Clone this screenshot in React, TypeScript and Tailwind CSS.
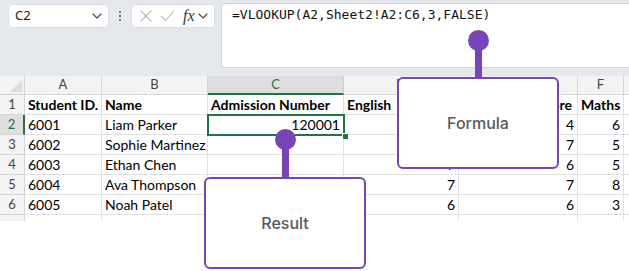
import React from "react";

const cols = [
  { key: "A", w: 77, label: "A" },
  { key: "B", w: 106, label: "B" },
  { key: "C", w: 136, label: "C" },
  { key: "D", w: 115, label: "D" },
  { key: "E", w: 119, label: "E" },
  { key: "F", w: 46, label: "F" },
  { key: "G", w: 40, label: "" },
];

type Row = { n: number; cells: (string | number)[]; bold?: boolean };

const rows: Row[] = [
  { n: 1, cells: ["Student ID.", "Name", "Admission Number", "English", "Science Score", "Maths", ""], bold: true },
  { n: 2, cells: ["6001", "Liam Parker", 120001, "", 4, 6, ""] },
  { n: 3, cells: ["6002", "Sophie Martinez", "", "", 7, 5, ""] },
  { n: 4, cells: ["6003", "Ethan Chen", "", 7, 6, 5, ""] },
  { n: 5, cells: ["6004", "Ava Thompson", "", 7, 7, 8, ""] },
  { n: 6, cells: ["6005", "Noah Patel", "", 6, 6, 3, ""] },
];

function Chevron({ className }: { className?: string }) {
  return (
    <svg className={className} width="10" height="6" viewBox="0 0 10 6" fill="none">
      <path d="M1 1l4 4 4-4" stroke="#444" strokeWidth="1.1" strokeLinecap="round" strokeLinejoin="round" />
    </svg>
  );
}

export default function App() {
  return (
    <div className="relative w-[629px] h-[271px] overflow-hidden bg-white" style={{ fontFamily: "Lato, 'Liberation Sans', sans-serif" }}>
      {/* top bar */}
      <div className="h-[76px] bg-[#e4e7eb] flex items-start">
        <div className="shrink-0 ml-[8px] mt-[4px] w-[101px] h-[24px] bg-white rounded-[4px] border border-[#dcdfe3] flex items-center justify-between pl-[6px] pr-[6px]">
          <span className="text-[13px] text-[#222]" style={{ fontFamily: "'Noto Sans', sans-serif" }}>C2</span>
          <Chevron />
        </div>
        <div className="shrink-0 w-[22px] h-[32px] flex flex-col items-center justify-center gap-[2px]">
          <span className="w-[2px] h-[2px] bg-[#555] rounded-full" />
          <span className="w-[2px] h-[2px] bg-[#555] rounded-full" />
          <span className="w-[2px] h-[2px] bg-[#555] rounded-full" />
        </div>
        <div className="shrink-0 mt-[4px] w-[84px] h-[24px] bg-white rounded-[4px] border border-[#dcdfe3] flex items-center pl-[7px] pr-[3px]">
          <svg width="14" height="14" viewBox="0 0 14 14" fill="none">
            <path d="M2 2l10 10M12 2L2 12" stroke="#b8b8b8" strokeWidth="1.1" strokeLinecap="round" />
          </svg>
          <svg className="ml-[7px]" width="15" height="14" viewBox="0 0 15 14" fill="none">
            <path d="M1.5 7.5l4 4 8-9" stroke="#b8b8b8" strokeWidth="1.1" strokeLinecap="round" strokeLinejoin="round" />
          </svg>
          <span className="ml-[8px] text-[16px] italic text-[#333] leading-none" style={{ fontFamily: "'Liberation Serif', serif" }}>fx</span>
          <Chevron className="ml-[3px]" />
        </div>
        <div
          className="ml-[6px] mt-[3px] flex-1 h-[65px] bg-white rounded-l-[4px] border border-[#d2d5d9] border-r-0 pl-[10px] pt-[3px] text-[13px] leading-[16px] text-[#111]"
          style={{ fontFamily: "'DejaVu Sans Mono', monospace" }}
        >
          =VLOOKUP(A2,Sheet2!A2:C6,3,FALSE)
        </div>
      </div>

      {/* grid */}
      <div className="flex flex-col">
        {/* column header */}
        <div className="flex h-[19px]">
          <div className="w-[25px] shrink-0 h-full bg-[#f3f3f3] border-r border-b border-[#d5d5d5] relative">
            <svg className="absolute right-[2px] bottom-[2px]" width="12" height="12" viewBox="0 0 12 12">
              <path d="M12 0L12 12L0 12Z" fill="#dcdcdc" />
            </svg>
          </div>
          {cols.map((c) => (
            <div
              key={c.key}
              className={
                c.key === "C"
                  ? "h-full bg-[#dedede] border-r border-[#d0d0d0] border-b-2 border-b-[#217346] flex items-center justify-center text-[13px] text-[#217346]"
                  : "h-full bg-[#f3f3f3] border-r border-b border-[#d5d5d5] flex items-center justify-center text-[13px] text-[#444]"
              }
              style={{ width: c.w, flexShrink: 0 }}
            >
              {c.label}
            </div>
          ))}
        </div>
        {rows.map((r) => (
          <div key={r.n} className="flex h-[20px]">
            <div
              className={
                r.n === 2
                  ? "w-[25px] shrink-0 h-full bg-[#dedede] border-r-2 border-r-[#217346] border-b border-[#d5d5d5] flex items-center justify-center text-[13px] text-[#217346]"
                  : "w-[25px] shrink-0 h-full bg-[#f3f3f3] border-r border-b border-[#d5d5d5] flex items-center justify-center text-[13px] text-[#444]"
              }
            >
              {r.n}
            </div>
            {cols.map((c, i) => {
              const v = r.cells[i];
              const isNum = typeof v === "number";
              const rightHead = r.bold && c.key === "E";
              return (
                <div
                  key={c.key}
                  className={
                    "h-full border-r border-b border-[#e1e1e1] flex items-center text-[14px] text-black whitespace-nowrap overflow-hidden " +
                    (isNum ? "justify-end pl-[3px] pr-[3px] " : rightHead ? "justify-end pr-[5px] " : "justify-start pl-[3px] pr-[3px] ") +
                    (r.bold ? "font-bold" : "")
                  }
                  style={{ width: c.w, flexShrink: 0 }}
                >
                  {v}
                </div>
              );
            })}
          </div>
        ))}
        <div className="flex h-[6px]">
          <div className="w-[25px] shrink-0 h-full bg-[#f3f3f3] border-r border-[#d5d5d5]" />
          {cols.map((c) => (
            <div key={c.key} className="h-full border-r border-[#e1e1e1]" style={{ width: c.w, flexShrink: 0 }} />
          ))}
        </div>
      </div>

      {/* selected cell */}
      <div className="absolute left-[207px] top-[114px] w-[138px] h-[22px] border-2 border-[#217346]" />
      <div className="absolute left-[342px] top-[133px] w-[5px] h-[5px] bg-[#217346] border border-white box-content" />

      {/* Formula callout */}
      <div className="absolute left-[468px] top-[30px] w-[21px] h-[21px] rounded-full bg-[#7845b8]" />
      <div className="absolute left-[475px] top-[40px] w-[7px] h-[38px] bg-[#7845b8]" />
      <div className="absolute left-[397px] top-[77px] w-[162px] h-[92px] bg-white border-2 border-[#7845b8] rounded-[6px] flex items-center justify-center">
        <span className="text-[16px] font-medium text-[#595959]" style={{ fontFamily: "Inter, sans-serif" }}>Formula</span>
      </div>

      {/* Result callout */}
      <div className="absolute left-[275px] top-[129px] w-[21px] h-[21px] rounded-full bg-[#7845b8]" />
      <div className="absolute left-[282px] top-[139px] w-[7px] h-[39px] bg-[#7845b8]" />
      <div className="absolute left-[204px] top-[177px] w-[162px] h-[92px] bg-white border-2 border-[#7845b8] rounded-[6px] flex items-center justify-center">
        <span className="text-[16px] font-medium text-[#595959]" style={{ fontFamily: "Inter, sans-serif" }}>Result</span>
      </div>
    </div>
  );
}
